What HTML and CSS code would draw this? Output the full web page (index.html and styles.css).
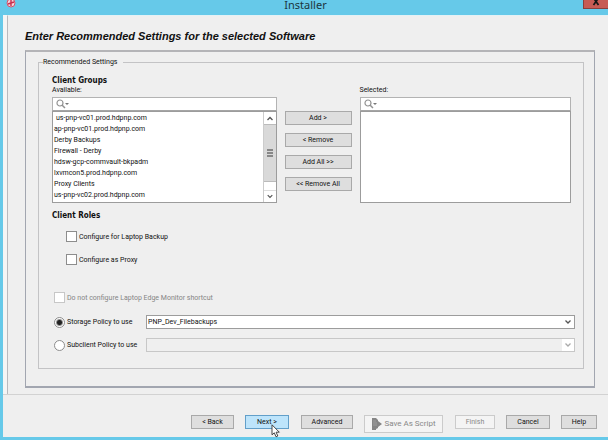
FILE: index.html
```html
<!DOCTYPE html>
<html lang="en">
<head>
<meta charset="utf-8">
<title>Installer</title>
<link rel="stylesheet" href="styles.css">
</head>
<body>
<div class="window">
  <header class="titlebar">
    <svg class="app-icon" viewBox="0 0 10 10" aria-hidden="true"><circle cx="5" cy="3" r="4" fill="#f3d3dc" stroke="#d4526b"/><path d="M5 0v3L2 4M5 3l3-1M5 3v3" fill="none" stroke="#c92d4c" stroke-width="1.400"/></svg>
    <span class="window-title">Installer</span>
    <button class="close" aria-label="Close"><svg viewBox="0 0 8 6" aria-hidden="true"><path d="M1.500-2l5 7M6.500-2l-5 7" stroke="#151515" stroke-width="1.700"/></svg></button>
  </header>
  <main class="page">
    <h1>Enter Recommended Settings for the selected Software</h1>
    <div class="panel">
      <fieldset>
        <legend>Recommended Settings</legend>
        <h2>Client Groups</h2>
        <div class="groups">
          <section class="picker">
            <label for="available">Available:</label>
            <div class="search">
              <svg viewBox="0 0 14 10" aria-hidden="true"><circle cx="4" cy="4" r="3" fill="none" stroke="#929292" stroke-width="1.2"/><path d="M6 6l3 3" stroke="#929292" stroke-width="1.5"/><path d="M9 4h4l-2 2z" fill="#777"/></svg>
              <input type="text" aria-label="Search available">
            </div>
            <div class="list">
              <select id="available" size="8" multiple>
                <option class="lead">us-pnp-vc01.prod.hdpnp.com</option>
                <option>ap-pnp-vc01.prod.hdpnp.com</option>
                <option>Derby Backups</option>
                <option>Firewall - Derby</option>
                <option>hdsw-gcp-commvault-bkpadm</option>
                <option>lxvmcon5.prod.hdpnp.com</option>
                <option>Proxy Clients</option>
                <option>us-pnp-vc02.prod.hdpnp.com</option>
              </select>
              <div class="scrollbar" aria-hidden="true">
                <svg viewBox="0 0 12 12"><path d="M3.500 8L6 5.500l2.500 2.500" /></svg>
                <div class="thumb"><i></i><i></i><i></i></div>
                <svg class="down" viewBox="0 0 12 12"><path d="M3.500 4.500L6 7l2.500-2.500"/></svg>
              </div>
            </div>
          </section>
          <div class="moves">
            <button>Add &gt;</button>
            <button>&lt; Remove</button>
            <button>Add All &gt;&gt;</button>
            <button>&lt;&lt; Remove All</button>
          </div>
          <section class="picker">
            <label for="selected">Selected:</label>
            <div class="search">
              <svg viewBox="0 0 14 10" aria-hidden="true"><circle cx="4" cy="4" r="3" fill="none" stroke="#929292" stroke-width="1.2"/><path d="M6 6l3 3" stroke="#929292" stroke-width="1.5"/><path d="M9 4h4l-2 2z" fill="#777"/></svg>
              <input type="text" aria-label="Search selected">
            </div>
            <div class="list"><select id="selected" size="8" multiple></select></div>
          </section>
        </div>
        <h2 class="roles-title">Client Roles</h2>
        <div class="roles">
          <label class="choice"><input type="checkbox">Configure for Laptop Backup</label>
          <label class="choice"><input type="checkbox">Configure as Proxy</label>
        </div>
        <label class="choice disabled"><input type="checkbox" disabled>Do not configure Laptop Edge Monitor shortcut</label>
        <div class="policies">
          <label class="choice"><input type="radio" name="policy" checked>Storage Policy to use</label>
          <div class="combo">
            <select aria-label="Storage policy"><option>PNP_Dev_Filebackups</option></select>
            <svg viewBox="0 0 12 12" aria-hidden="true"><path d="M3.500 4.500L6 7l2.500-2.500"/></svg>
          </div>
          <label class="choice"><input type="radio" name="policy">Subclient Policy to use</label>
          <div class="combo off">
            <select aria-label="Subclient policy" disabled><option></option></select>
            <svg viewBox="0 0 12 12" aria-hidden="true"><path d="M3.500 4.500L6 7l2.500-2.500"/></svg>
          </div>
        </div>
      </fieldset>
    </div>
  </main>
  <footer class="actions">
    <button class="back">&lt; Back</button>
    <div class="next">
      <button>Next &gt;</button>
      <svg class="cursor" viewBox="0 0 10 14" aria-hidden="true"><path d="M1 .8v10l2.300-2 1.700 4 1.800-.8-1.700-3.800h3.200z" fill="#fff" stroke="#333" stroke-width=".9"/></svg>
    </div>
    <button class="advanced">Advanced</button>
    <button class="script" disabled><svg viewBox="0 0 11 12" aria-hidden="true"><path d="M1 0h4l2 2v1l4 3-4 3v1l-2 1v1H1z" fill="#858585"/><path d="M2 3h3M2 5h4M2 7h4" stroke="#aaa" stroke-width=".7"/></svg>Save As Script</button>
    <button class="finish" disabled>Finish</button>
    <button class="cancel">Cancel</button>
    <button class="help">Help</button>
  </footer>
</div>
</body>
</html>
```
FILE: styles.css
```css
* { box-sizing: border-box; }
body {
  margin: 0;
  background: #66c9e9;
  color: #111;
  font: 7px/10px Roboto, "Noto Sans", sans-serif;
}
button, input, select, option { font: inherit; color: inherit; margin: 0; }
h1, h2 { margin: 0; color: #111; }
.window { min-height: 100vh; padding: 0 0 3px 3px; display: flex; flex-direction: column; }

.titlebar { height: 15px; display: grid; grid-template-columns: 1fr auto 1fr; align-items: start; }
.app-icon { width: 10px; height: 10px; margin-left: 3px; }
.window-title { font: 11px/9px "Noto Sans", sans-serif; color: #1c3540; }
.close {
  justify-self: end; width: 25px; height: 9px; padding: 0;
  border: 1px solid #8b3f3c; border-width: 0 0 1px 1px; background: #c75b54;
  display: flex; justify-content: center;
}
.close svg { width: 8px; height: 6px; }

.page {
  flex: 1; background: #efefef; padding: 13px 13px 6px 17px;
  margin-left: 4px; border-left: 1px solid #b9b9be;
  box-shadow: -4px 0 #f5f5f5; border-top: 1px solid #e4f1f5;
  display: flex; flex-direction: column;
}
h1 { font: italic bold 11px/14px "Liberation Sans", Arial, sans-serif; margin-bottom: 7px; }
.panel { flex: 1; border: 1px solid #a2a6b0; border-width: 2px 1px 2px 1px; border-top-color: #b4b4b7; padding: 6px 10px 17px 12px; display: flex; }
fieldset { flex: 1; min-width: 0; margin: 0; border: 1px solid #c3c3c5; padding: 9px 12px 12px 13px; }
legend { margin-left: -9px; padding: 0 6px 0 0; line-height: 9px; }
h2 { font: bold 8px/10px "DejaVu Sans Condensed", sans-serif; }

.groups { display: grid; grid-template-columns: 224fr 67px 211fr; column-gap: 8px; }
.picker { display: flex; flex-direction: column; min-width: 0; }
.picker label { line-height: 8px; margin-bottom: 3px; }
.search { height: 14px; background: #fff; border: 1px solid #b3b3b3; border-bottom-color: #a5a5a5; display: flex; align-items: center; padding-left: 3px; }
.search svg { width: 14px; height: 10px; flex: none; }
.search input { flex: 1; min-width: 0; border: 0; padding: 0; height: 11px; background: none; outline: 0; }
.list { height: 92px; background: #fff; border: 1px solid #9c9c9c; display: flex; }
.list select { flex: 1; min-width: 0; height: 90px; border: 0; border-radius: 0; padding: 2px 0 0; background: #fff; overflow: hidden; outline: 0; }
.list option { padding: 0 1px; height: 11px; min-height: 11px; line-height: 11px; }
.list .lead { padding-left: 3px; }
.scrollbar { width: 13px; border-left: 1px solid #ccc; display: flex; flex-direction: column; }
.scrollbar svg { width: 12px; height: 12px; }
.scrollbar .down { margin-top: auto; border-top: 1px solid #ddd; }
.scrollbar path, .combo path { fill: none; stroke: #555; stroke-width: 1.3; }
.thumb { height: 58px; background: #d9d9d9; border: 1px solid #bbb; border-width: 1px 0; display: flex; flex-direction: column; align-items: center; justify-content: center; gap: 1px; }
.thumb i { width: 6px; height: 2px; background: #888; }

.moves { display: flex; flex-direction: column; gap: 8px; padding-top: 25px; }
button { height: 14px; padding: 0; border: 1px solid #a9a9a9; background: #dedede; line-height: 10px; white-space: nowrap; }

.roles-title { margin-top: 8px; }
.roles { padding-left: 14px; margin: 10px 0 27px; display: flex; flex-direction: column; gap: 12px; align-items: flex-start; }
.choice { display: flex; align-items: center; gap: 2px; height: 11px; white-space: nowrap; }
.choice input { appearance: none; width: 11px; height: 11px; flex: none; border: 1px solid #8d8d8d; background: #fff; }
.choice input[type="radio"] { border-radius: 50%; }
.choice input[type="radio"]:checked { background: radial-gradient(circle at center, #222 2px, #fff 4px); }
.choice.disabled { color: #858585; }
.choice.disabled input { border-color: #c7c7c7; }
.roles + .choice, .policies { margin-left: 2px; }
.policies { margin-top: 12px; margin-right: -4px; display: grid; grid-template-columns: 92px 1fr; row-gap: 9px; align-items: center; }
.combo { position: relative; height: 14px; border: 1px solid #9c9c9c; background: #fff; }
.combo select { appearance: none; display: block; width: 100%; height: 12px; border: 0; padding: 0 14px 0 1px; background: none; line-height: 12px; border-radius: 0; }
.combo svg { position: absolute; right: 0; top: 0; width: 12px; height: 12px; pointer-events: none; }
.combo.off { border-color: #c7c7c7; background: #efefef; }
.combo.off svg { background: #fff; }
.combo.off path { stroke: #aaa; }

.actions {
  height: 43px; background: #efefef; border-top: 1px solid #d2d2d2;
  padding: 20px 11px 0 0; display: flex; justify-content: flex-end; align-items: flex-start;
}
.back { width: 43px; margin-right: 11px; }
.next { position: relative; margin-right: 12px; }
.next button { width: 44px; background: #bde4fb; border-color: #629fc9; }
.cursor { position: absolute; left: 26px; top: 9px; width: 10px; height: 14px; }
.advanced { width: 52px; margin-right: 11px; }
.script { width: 79px; height: 18px; margin-right: 12px; display: flex; align-items: center; justify-content: center; gap: 2px; font-size: 8px; }
.script svg { width: 11px; height: 12px; }
.finish { width: 40px; margin-right: 11px; }
button:disabled { color: #888; background: #f4f4f4; border-color: #cbcbcb; }
.cancel { width: 44px; margin-right: 11px; }
.help { width: 36px; }
```
